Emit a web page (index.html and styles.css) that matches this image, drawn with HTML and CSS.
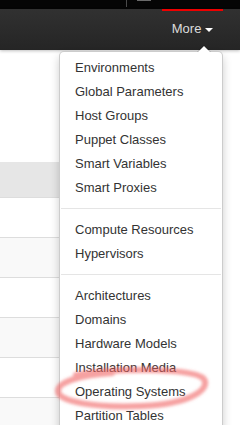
FILE: index.html
```html
<!DOCTYPE html>
<html lang="en">
<head>
    <meta charset="UTF-8">
    <meta name="viewport" content="width=device-width, initial-scale=1.0">
    <title>Operating Systems</title>
    <link rel="stylesheet" href="styles.css">
</head>
<body>

<div class="topbar">
    <span class="tick"></span>
    <span class="dash"></span>
</div>

<div class="navbar">
    <ul class="nav">
        <li class="dropdown active">
            <a href="#" class="dropdown-toggle">More <b class="caret"></b></a>
            <ul class="dropdown-menu">
                <li><a href="#">Environments</a></li>
                <li><a href="#">Global Parameters</a></li>
                <li><a href="#">Host Groups</a></li>
                <li><a href="#">Puppet Classes</a></li>
                <li><a href="#">Smart Variables</a></li>
                <li><a href="#">Smart Proxies</a></li>
                <li class="divider"></li>
                <li><a href="#">Compute Resources</a></li>
                <li><a href="#">Hypervisors</a></li>
                <li class="divider"></li>
                <li><a href="#">Architectures</a></li>
                <li><a href="#">Domains</a></li>
                <li><a href="#">Hardware Models</a></li>
                <li><a href="#">Installation Media</a></li>
                <li><a href="#">Operating Systems</a></li>
                <li><a href="#">Partition Tables</a></li>
            </ul>
        </li>
    </ul>
</div>

<div class="content">
    <div class="title-row">
        <a href="#" class="btn-new"></a>
    </div>
    <div class="grid">
        <div class="grid-head"></div>
        <div class="grid-row"></div>
        <div class="grid-row"></div>
        <div class="grid-row"></div>
        <div class="grid-row"></div>
        <div class="grid-row"></div>
        <div class="grid-row"></div>
    </div>
</div>

<!-- hand drawn highlight round "Operating Systems" -->
<svg class="scribble" width="165" height="50" viewBox="0 0 165 50">
    <defs>
        <filter id="soft" x="-10%" y="-30%" width="120%" height="160%">
            <feGaussianBlur stdDeviation="1.6"/>
        </filter>
    </defs>
    <path d="M 26 10 C 64 3, 140 3, 153 13 C 162 22, 144 39, 92 41 C 46 43, 8 37, 8 26 C 8 17, 30 10, 62 8"
          fill="none" stroke="#f06464" stroke-opacity="0.6" stroke-width="6" stroke-linecap="round" filter="url(#soft)"/>
</svg>

</body>
</html>
```

FILE: styles.css
```css
body {
    margin: 0;
    font-family: "Liberation Sans", Arial, sans-serif;
    font-size: 13px;
    line-height: 18px;
    color: #333;
    background: #fff;
}
.topbar {
    height: 9px;
    background: #050505;
    display: flex;
    align-items: flex-start;
    gap: 10px;
    padding-left: 126px;
}
.topbar .tick {
    width: 1px;
    height: 7px;
    background: #4a4a4a;
}
.topbar .dash {
    width: 14px;
    height: 1px;
    background: #6a6a6a;
}
.navbar {
    position: relative;
    z-index: 10;
    height: 41px;
    background: linear-gradient(#313131, #252525);
    box-shadow: 0 1px 3px rgba(0, 0, 0, 0.25);
}
.nav {
    list-style: none;
    margin: 0;
    padding: 0 17px 0 0;
    display: flex;
    justify-content: flex-end;
}
.nav > li {
    position: relative;
}
.dropdown-toggle {
    display: block;
    padding: 9px 10px 12px;
    border-top: 2px solid #ee0000;
    color: #dcdcdc;
    text-decoration: none;
}
.caret {
    display: inline-block;
    width: 0;
    height: 0;
    vertical-align: top;
    margin-top: 8px;
    border-top: 4px solid #fff;
    border-left: 4px solid transparent;
    border-right: 4px solid transparent;
}
.dropdown-menu {
    position: absolute;
    top: 100%;
    right: 0;
    z-index: 1000;
    min-width: 162px;
    margin: 1px 0 0;
    padding: 4px 0 40px;
    list-style: none;
    background: #fff;
    border: 1px solid rgba(0, 0, 0, 0.2);
    border-radius: 5px;
    box-shadow: 0 5px 10px rgba(0, 0, 0, 0.2);
}
.dropdown-menu:before {
    content: "";
    position: absolute;
    top: -7px;
    right: 11px;
    border-left: 7px solid transparent;
    border-right: 7px solid transparent;
    border-bottom: 7px solid rgba(0, 0, 0, 0.2);
}
.dropdown-menu:after {
    content: "";
    position: absolute;
    top: -6px;
    right: 12px;
    border-left: 6px solid transparent;
    border-right: 6px solid transparent;
    border-bottom: 6px solid #fff;
}
.dropdown-menu a {
    display: block;
    padding: 3px 15px;
    color: #333;
    white-space: nowrap;
    text-decoration: none;
}
.dropdown-menu .divider {
    height: 1px;
    margin: 8px 1px;
    overflow: hidden;
    background: #e5e5e5;
    border-bottom: 1px solid #fff;
}
.content {
    padding-right: 17px;
}
.title-row {
    display: flex;
    justify-content: flex-end;
    padding-top: 67px;
}
.btn-new {
    display: block;
    width: 110px;
    height: 24px;
    border-radius: 3px;
    background: linear-gradient(#5bb75b, #3f9a3f);
}
.grid {
    margin: 21px 8px 0 0;
}
.grid-head {
    height: 35px;
    background: #e6e6e6;
}
.grid-row {
    height: 40px;
    box-sizing: border-box;
    border-top: 1px solid #ddd;
}
.grid-row:nth-child(odd) {
    background: #f9f9f9;
}
.scribble {
    position: absolute;
    left: 50px;
    top: 365px;
    z-index: 2000;
}
```
